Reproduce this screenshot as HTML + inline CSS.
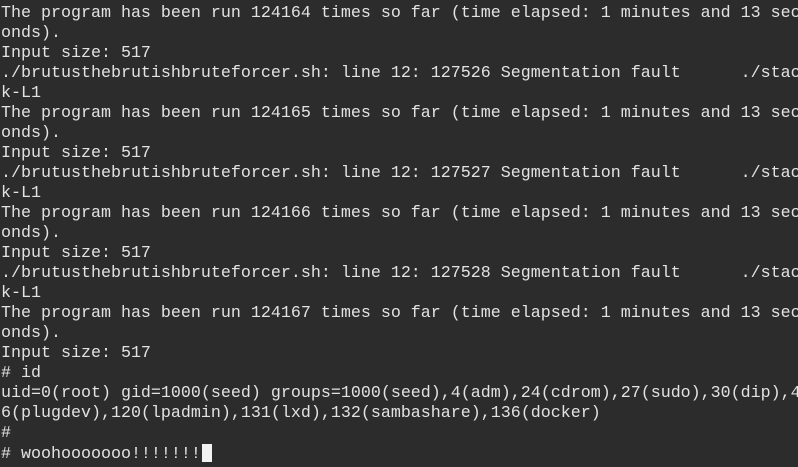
<!DOCTYPE html>
<html><head><style>
html,body{margin:0;padding:0;background:#2c2c2c;width:798px;height:467px;overflow:hidden}
pre{margin:0;position:absolute;left:1px;top:4px;font-family:"Liberation Mono","DejaVu Sans Mono",monospace;font-size:16.67px;line-height:20px;color:#e2e2e2;white-space:pre}
.c{display:inline-block;width:10px;height:18px;background:#f2f2f2;vertical-align:-4px;margin-left:1px}
</style></head><body><pre>The program has been run 124164 times so far (time elapsed: 1 minutes and 13 sec
onds).
Input size: 517
./brutusthebrutishbruteforcer.sh: line 12: 127526 Segmentation fault      ./stac
k-L1
The program has been run 124165 times so far (time elapsed: 1 minutes and 13 sec
onds).
Input size: 517
./brutusthebrutishbruteforcer.sh: line 12: 127527 Segmentation fault      ./stac
k-L1
The program has been run 124166 times so far (time elapsed: 1 minutes and 13 sec
onds).
Input size: 517
./brutusthebrutishbruteforcer.sh: line 12: 127528 Segmentation fault      ./stac
k-L1
The program has been run 124167 times so far (time elapsed: 1 minutes and 13 sec
onds).
Input size: 517
# id
uid=0(root) gid=1000(seed) groups=1000(seed),4(adm),24(cdrom),27(sudo),30(dip),4
6(plugdev),120(lpadmin),131(lxd),132(sambashare),136(docker)
#
# woohooooooo!!!!!!!<span class="c"></span></pre></body></html>
